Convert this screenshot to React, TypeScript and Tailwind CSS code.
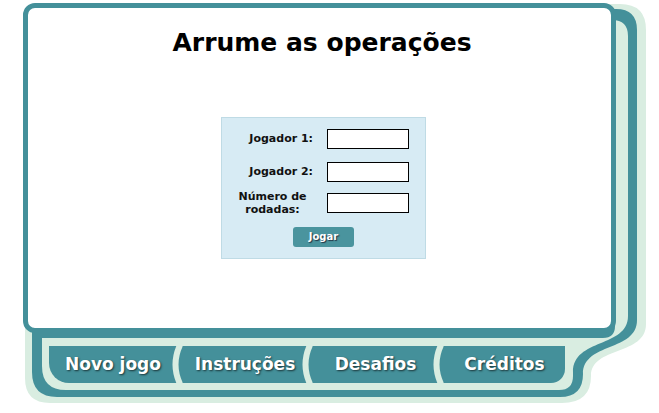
import React from "react";

const TABS = [
  { label: "Novo jogo", w: "w-[128px]" },
  { label: "Instruções", w: "w-[124px]" },
  { label: "Desafios", w: "w-[125px]" },
  { label: "Créditos", w: "w-[121px]" },
];

// stacked "pages" behind the card + the tray holding the tabs
function Frame() {
  return (
    <svg className="absolute inset-0" width="659" height="413" viewBox="0 0 659 413">
      <path
        d="M25 320 L25 378 Q25 403 50 403 L562 403 Q591 403 591 376 C591 346 646 356 646 324 L646 30 Q646 4 620 4 L40 4 Z"
        fill="#d9ede1"
      />
      <path
        d="M32 320 L32 372 Q32 397 57 397 L560 397 Q583 397 583 374 C583 342 637 352 637 320 L637 30 Q637 9 616 9 L40 9 Z"
        fill="#44909a"
      />
      <path
        d="M42 338 L603 338 Q615 338 615 326 L615 20 L612 20 Q628 20 628 36 L628 316 C628 348 573 338 573 372 L573 376 Q573 390 559 390 L66 390 Q42 390 42 366 Z"
        fill="#d9ede1"
      />
    </svg>
  );
}

function Row({ label, wrap, className = "" }: { label: string; wrap?: boolean; className?: string }) {
  return (
    <div className={`flex items-center ${wrap ? "h-[26px]" : "h-[20px]"} ${className}`}>
      <label
        className={`w-[96px] pr-[5px] text-[11px] font-bold leading-[13px] text-[#111] ${
          wrap ? "pl-[10px] text-center" : "mb-[2px] text-right"
        }`}
      >
        {label}
      </label>
      <input type="text" className="ml-[9px] h-[20px] w-[82px] border border-black bg-white outline-none" />
    </div>
  );
}

function PlayerForm() {
  return (
    <div className="ml-[193px] mt-[59px] h-[142px] w-[205px] border border-[#bfdbe5] bg-[#d7ebf4] pt-[11px]">
      <Row label="Jogador 1:" />
      <Row label="Jogador 2:" className="mt-[13px]" />
      <Row label="Número de rodadas:" wrap className="mt-[8px]" />
      <button className="mx-auto mt-[11px] block h-[20px] w-[61px] rounded-[3px] bg-[#4a949e] text-[10px] font-bold leading-[20px] text-white [text-shadow:1px_1px_1px_#234]">
        Jogar
      </button>
    </div>
  );
}

function TabBar() {
  return (
    <div className="relative ml-[49px] mt-[13px] flex h-[37px] w-[516px] rounded-bl-[20px] rounded-br-[14px] bg-[#44909a]">
      {TABS.map((t, i) => (
        <React.Fragment key={t.label}>
          {i > 0 && (
            <div className="relative w-[6px] shrink-0">
              <svg className="absolute -left-[6px] top-0" width="16" height="37" viewBox="0 0 16 37">
                <path d="M9 -1 Q0 18.5 9 38" fill="none" stroke="#d9ede1" strokeWidth="6" />
              </svg>
            </div>
          )}
          <div
            className={`${t.w} flex shrink-0 items-center justify-center text-[17px] font-bold text-white [text-shadow:1px_1px_2px_#1a3438]`}
          >
            {t.label}
          </div>
        </React.Fragment>
      ))}
    </div>
  );
}

export default function App() {
  return (
    <div className="relative h-[413px] w-[659px] overflow-hidden bg-white font-['DejaVu_Sans',sans-serif]">
      <Frame />
      <div className="relative ml-[23px] mt-[3px] h-[330px] w-[593px] rounded-[12px] border-[5px] border-[#44909a] bg-white">
        <h1 className="pl-[5px] pt-[20px] text-center text-[25px] font-bold leading-[30px] text-black">
          Arrume as operações
        </h1>
        <PlayerForm />
      </div>
      <TabBar />
    </div>
  );
}
